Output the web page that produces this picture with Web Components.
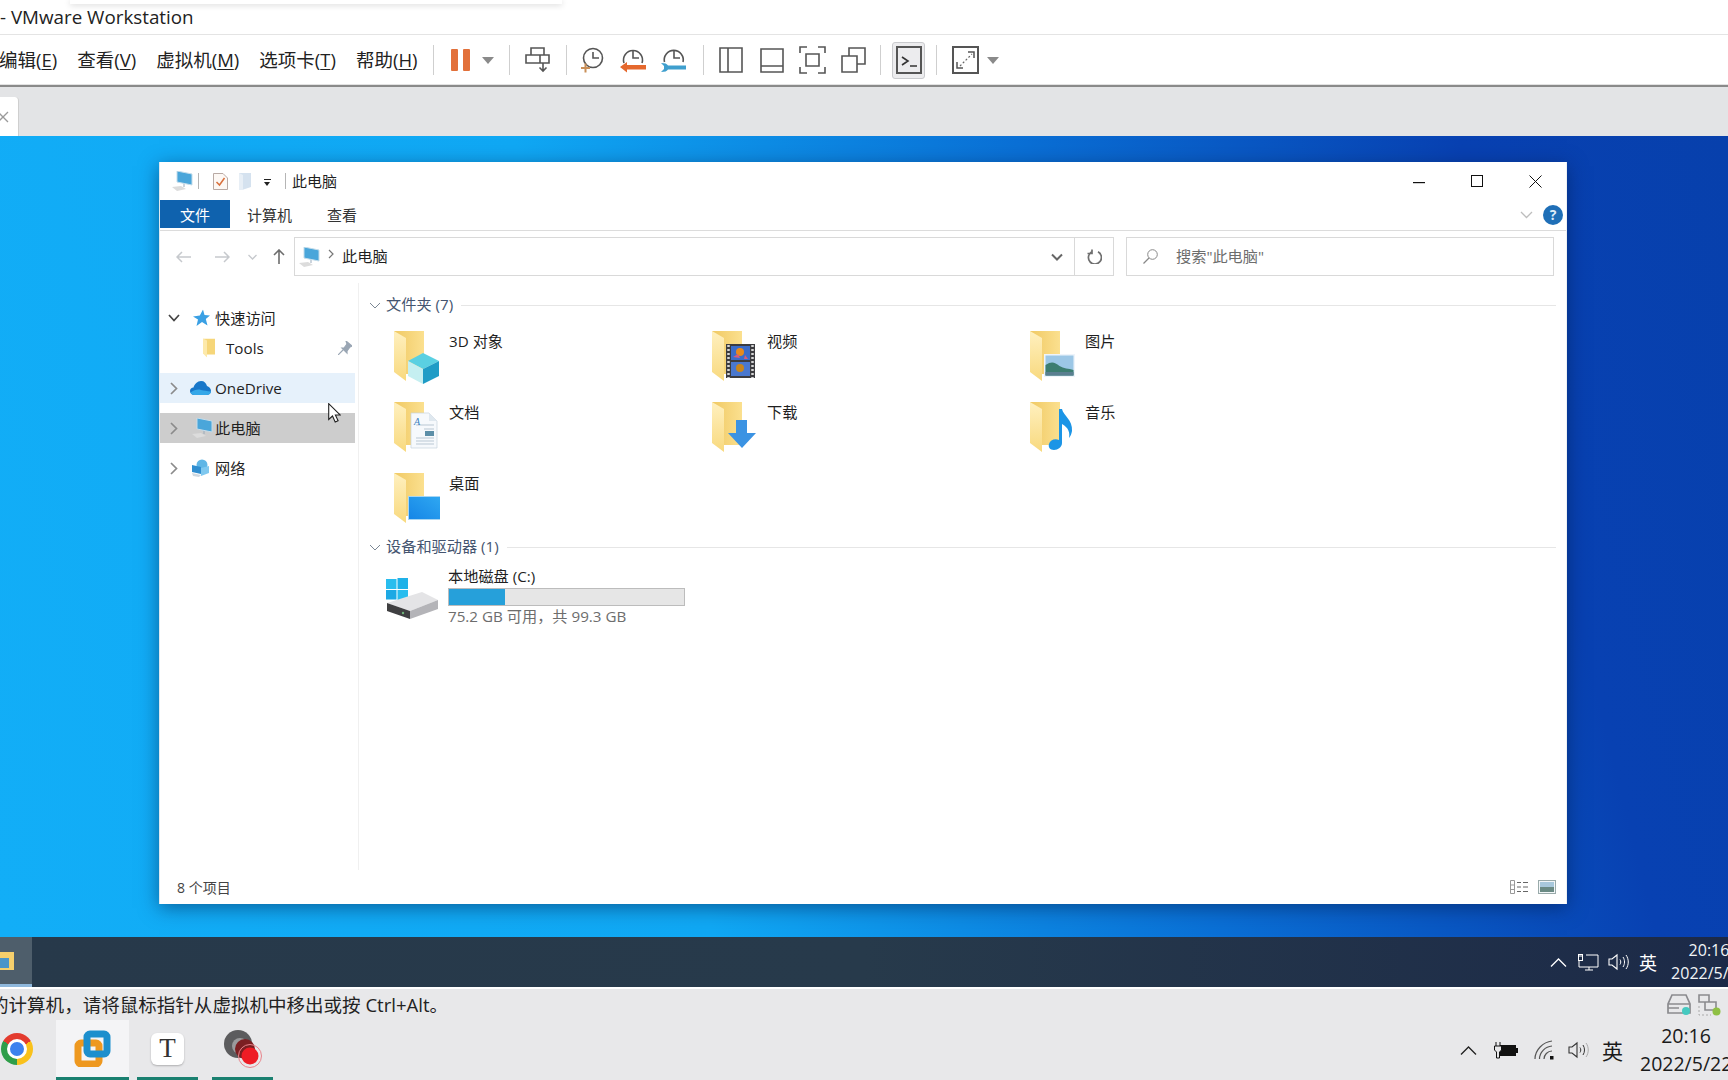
<!DOCTYPE html>
<html lang="zh">
<head>
<meta charset="utf-8">
<title>VMware Workstation</title>
<style>
html,body{margin:0;padding:0;width:1728px;height:1080px;overflow:hidden;background:#e8e8ea;}
body{display:flex;flex-direction:column;font-family:"Open Sans","Noto Sans CJK SC",sans-serif;color:#1a1a1a;}
</style>
</head>
<body>
<vm-titlebar>- VMware Workstation</vm-titlebar>
<vm-menubar></vm-menubar>
<vm-tabstrip></vm-tabstrip>
<guest-desktop>
  <explorer-window></explorer-window>
</guest-desktop>
<guest-taskbar></guest-taskbar>
<vm-statusbar>的计算机，请将鼠标指针从虚拟机中移出或按 Ctrl+Alt。</vm-statusbar>
<host-taskbar></host-taskbar>

<script>
const S = 'fill="none" stroke="#555" stroke-width="1.600"';
const FOLDER = `<path d="M0 0H30V43H12Z" fill="url(#b)"/><path d="M0 0L12 7V50L0 41Z" fill="url(#f)"/>
  <defs><linearGradient id="b" x1="0" x2="1" y1="0" y2="0"><stop offset="0" stop-color="#f0c964"/><stop offset="1" stop-color="#fbe08f"/></linearGradient>
  <linearGradient id="f" x1="0" x2="0" y1="0" y2="1"><stop offset="0" stop-color="#fff0bf"/><stop offset="1" stop-color="#f8d97e"/></linearGradient></defs>`;

// w, h, markup
const ICONS = {
  pc: [22,20,`<polygon points="6,0 21,3 21,14 6,11" fill="#4aa6da" stroke="#c4dcea"/><path d="M13 13v3" stroke="#9ab"/><polygon points="1,16 10,15 15,18 6,20" fill="#dcdcdc"/>`],
  check: [15,17,`<path d="M.5.5H10L14.5 5V16.5H.5Z" fill="#fdf8f4" stroke="#b9aaa4"/><path d="M3.5 9l3 3 5-7" fill="none" stroke="#d9703c" stroke-width="1.5"/>`],
  newfolder: [12,17,`<path d="M0 0H12V14L3 17H0Z" fill="#d5e2ef"/><path d="M0 0L4 2V17H0Z" fill="#e8eff6"/>`],
  star: [17,17,`<polygon points="10,0 11.5,5.5 17,6 12.8,9.6 14.5,16 9,12.4 3.5,16.5 5,10 0,7 6.8,6" fill="#3aa0e4"/>`],
  smallfolder: [12,19,`<path d="M0 0H12V16H4Z" fill="#f6d679"/><path d="M0 0L4 2V19L0 15Z" fill="#fde9aa"/>`],
  pin: [14,14,`<path d="M8 0l6 5-2 1-3 4 0 2-5-5 2 0 3-4ZM5 9L0 14" fill="#9aa6b4" stroke="#9aa6b4" stroke-width="1.2"/>`],
  cloud: [21,14,`<path d="M4.5 14C1.5 14 0 12 0 10S1.5 6.5 3.5 6.5C4.5 3 7.5 0 11 0S16 2 17 5C19 5.5 21 7.5 21 10S19 14 16.5 14Z" fill="#1877c9"/><path d="M4.5 14C2.5 14 1 13 .5 11.5 4 9 8 8 11 9c3 .8 6 1 10 1.5C20.700 12.500 19 14 16.500 14Z" fill="#35a7e8"/>`],
  net: [19,18,`<circle cx="11" cy="6" r="5.500" fill="#5fb6e6"/><polygon points="1,6 10,8 10,15 1,13" fill="#2f8ed0"/><polygon points="10,9 18,7 18,14 10,17" fill="#7fc8ef"/><polygon points="1,14 10,16 8,18 2,17" fill="#cfd8e0"/>`],
  cursor: [13,20,`<path d="M.7.7V16.500L4.500 13l2.700 6 2.900-1.300L7.400 12H12.300Z" fill="#fff" stroke="#222" stroke-width="1.100"/>`],
  back: [15,12,`<path d="M15 6H1M6 1L1 6l5 5" fill="none" stroke="#c6c9cd" stroke-width="1.500"/>`],
  fwd: [15,12,`<path d="M0 6H14M9 1l5 5-5 5" fill="none" stroke="#c6c9cd" stroke-width="1.500"/>`],
  down: [9,6,`<path d="M.5 1L4.500 5 8.500 1" fill="none" stroke="#c6c9cd" stroke-width="1.300"/>`],
  up: [12,15,`<path d="M6 15V1M1 6l5-5 5 5" fill="none" stroke="#6d6d6d" stroke-width="1.600"/>`],
  crumb: [6,10,`<path d="M1 1l4 4-4 4" fill="none" stroke="#777" stroke-width="1.200"/>`],
  chevD: [12,8,`<path d="M1 1.500L6 6.500 11 1.500" fill="none" stroke="#666" stroke-width="2"/>`],
  chevL: [12,7,`<path d="M1 1l5 5 5-5" fill="none" stroke="#7b8794" stroke-width="1"/>`],
  treeOpen: [12,8,`<path d="M1 1l5 5.500L11 1" fill="none" stroke="#444" stroke-width="1.700"/>`],
  treeClosed: [8,13,`<path d="M1 1l5.500 5.500L1 12" fill="none" stroke="#8b8b8b" stroke-width="1.700"/>`],
  refresh: [15,15,`<path d="M4 2.500A6.500 6.500 0 1 0 10.500 2.300M4.500 0V4H0" fill="none" stroke="#6f6f6f" stroke-width="1.700" transform="translate(.5 .5)"/>`],
  search: [15,15,`<circle cx="9.500" cy="5.500" r="4.800" fill="none" stroke="#888"/><path d="M6 9L.5 14.500" stroke="#888" stroke-width="1.200"/>`],
  min: [12,2,`<rect width="12" height="1.200" fill="#111"/>`],
  max: [12,12,`<rect x=".5" y=".5" width="11" height="11" fill="none" stroke="#111"/>`],
  close: [13,13,`<path d="M.5.5l12 12M12.500.5l-12 12" stroke="#111"/>`],
  ribchev: [13,8,`<path d="M1 1l5.500 5.500L12 1" fill="none" stroke="#bdbdbd" stroke-width="1.300"/>`],
  details: [18,14,`<path d="M.5.5h4v13h-4zM.5 5h4M.5 9.500h4" fill="none" stroke="#999"/><path d="M7 2.500h4M13 2.500h5M7 7h4M13 7h5M7 11.500h4M13 11.500h5" stroke="#666"/>`],
  large: [18,14,`<rect x=".5" y=".5" width="17" height="13" fill="#f2f6f8" stroke="#9aa"/><rect x="2" y="2" width="14" height="5" fill="#a8c8dc"/><rect x="2" y="7" width="14" height="5" fill="#6a8a84"/>`],
  drive: [52,42,`<rect x="0" y="1" width="10.500" height="10" fill="#29bdee"/><rect x="11.500" y="0" width="10.500" height="11" fill="#1fb1e8"/><rect x="0" y="12" width="10.500" height="9.500" fill="#1da9e4"/><rect x="11.500" y="12" width="10.500" height="10" fill="#29bdee"/>
     <polygon points="1,25 36,14 52,22 24,33" fill="#e4e4e6"/><polygon points="1,25 24,33 24,41 1,33" fill="#3f3f41"/><polygon points="24,33 52,22 52,31 24,41" fill="#b4b4b8"/><circle cx="17" cy="35" r="1.200" fill="#6fb37a"/>`],
  // toolbar
  send: [25,26,`<path ${S} d="M6 8V1h13v7M1 8h23v8H1zM15 8v8M18 16v8M14.500 20.500l3.500 3.500 3.500-3.500"/>`],
  snap: [24,26,`<circle ${S} cx="13" cy="11" r="9.500"/><path ${S} d="M13 5v6h6"/><path d="M1 21h9M5.500 16.500v9" stroke="#c98f58" stroke-width="2"/>`],
  revert: [26,26,`<path ${S} d="M4 16A9.500 9.500 0 1 1 22 16"/><path ${S} d="M13 4v7h6"/><path d="M0 20l7-5v3h19v4.500H7v3Z" fill="#e5682d"/>`],
  manage: [25,26,`<path ${S} d="M3.500 15A9.500 9.500 0 1 1 22 15"/><path ${S} d="M13 4v7h6"/><path d="M0 16c4 0 6 .8 7 2.500H25v4H7c-1 1.700-3 2.500-7 2.500l3-3v-3Z" fill="#3f9fce"/>`],
  pane: [24,26,`<path ${S} d="M1 1h22v24H1zM9 1v24"/>`],
  lib: [24,25,`<path ${S} d="M1 1h22v23H1zM1 18h22"/>`],
  fit: [27,28,`<path ${S} d="M1 7V1h7M19 1h7v6M26 21v6h-7M8 27H1v-6M7 8h13v12H7z"/>`],
  multi: [25,26,`<path ${S} d="M1 9h15v16H1zM8 9V1h16v16h-8"/>`],
  console: [26,28,`<rect x="1" y="1" width="24" height="26" fill="none" stroke="#555" stroke-width="2"/><path d="M6 11l6 4-6 4M14 20h7" fill="none" stroke="#333" stroke-width="1.600"/>`],
  full: [27,28,`<rect x="1" y="1" width="25" height="26" fill="none" stroke="#555" stroke-width="2"/><path d="M8 20L20 8" stroke="#666" stroke-width="1.200" stroke-dasharray="2 2"/><path d="M16 6h6v6M5 16v6h6" fill="none" stroke="#555" stroke-width="1.500"/>`],
  // tray
  gNet: [21,17,`<path d="M1 2h3M8 1h12v12H1V6M7 16h8M11 13v3" fill="none" stroke="#fff" stroke-width="1"/><rect x=".5" y="0.500" width="4" height="6" fill="none" stroke="#fff"/>`],
  spk: [21,18,`<path d="M1 6h3l5-4v14l-5-4H1Z" fill="none" stroke="CC" stroke-width="1.100"/><path d="M12 6.500c1 1.500 1 3.500 0 5M15 4c2 3 2 7 0 10" fill="none" stroke="CC"/><path d="M18 2c3 4 3 10 0 14" fill="none" stroke="C2"/>`],
  caretUp: [17,9,`<path d="M1 8.500L8.500 1 16 8.500" fill="none" stroke="CC" stroke-width="1.300"/>`],
  battery: [25,17,`<rect x="7" y="3" width="16" height="11" fill="#111"/><rect x="23" y="6" width="2" height="5" fill="#111"/><path d="M3 0v4M7 0v4" stroke="#111"/><path d="M1.500 4h7v4l-2 2v6h-3v-6l-2-2Z" fill="#e8e8ea" stroke="#111"/>`],
  wifi: [20,20,`<path d="M1 19C1 10 9 2 18 1M5.500 19c0-7 6-12.500 12.500-13M10 19c0-4 3.500-8 8-8" fill="none" stroke="#555" stroke-width="1.200"/><rect x="16" y="16" width="3.500" height="3.500" fill="#111"/>`],
  hdd: [25,21,`<path d="M1 19V10L5 1H19L23 10V19ZM1 10H23M1 14H12" fill="none" stroke="#8a8a8e" stroke-width="1.700"/><circle cx="19" cy="17" r="4" fill="#45c9c0"/>`],
  vnet: [23,22,`<path d="M1 1h10v7H1zM7 8h11v8H7z" fill="none" stroke="#8a8a8e" stroke-width="1.600"/><path d="M1 12v9h12" fill="none" stroke="#aaa" stroke-dasharray="2 2"/><circle cx="18.500" cy="17.500" r="4" fill="#8fc044"/>`],
  guestFolder: [15,20,`<path d="M0 1H14V19H0Z" fill="#f5cf6c"/><rect x="0" y="7" width="9" height="10" fill="#4a95c9"/>`],
  vmware: [37,37,`<rect x="4" y="13" width="21" height="21" rx="3" fill="none" stroke="#ee981f" stroke-width="7"/><rect x="13" y="4" width="20" height="20" rx="3" fill="none" stroke="#1d8fcd" stroke-width="7"/>`],
  record: [38,38,`<circle cx="14" cy="14" r="14" fill="#5c5c5e"/><circle cx="16" cy="16" r="8" fill="#9a9a9c"/><circle cx="21" cy="19" r="10" fill="#7c1f22"/><circle cx="26" cy="26" r="11.500" fill="none" stroke="#e8838a" stroke-width="1"/><circle cx="26" cy="26" r="8.500" fill="#ee1c25"/>`],
  // folder overlays
  "3d": [46,54,`${FOLDER}<polygon points="29,22 45,30 29,38 14,30" fill="#5ad0e2"/><polygon points="14,30 29,38 29,53 14,45" fill="#c5eff1"/><polygon points="45,30 29,38 29,53 45,45" fill="#1f9cc6"/>`],
  doc: [46,54,`${FOLDER}<path d="M17 11H35L43 19V46H17Z" fill="#f6f9fc" stroke="#c6d2dc" stroke-width=".7"/><path d="M35 11V19H43" fill="#dfe8ef"/><path d="M22 23H40M22 36H40M22 39H40M22 42H40M30 27H40" stroke="#b9c7d3" stroke-width="1"/><rect x="31" y="29" width="9" height="5" fill="#5c8fa8"/><text x="20" y="23" font-size="10" font-style="italic" font-family="Liberation Serif" fill="#3a7fbe">A</text>`],
  film: [46,54,`${FOLDER}<rect x="14" y="13" width="29" height="34" fill="#3c3c40"/><rect x="19" y="15" width="19" height="14" fill="#3b6cc9"/><rect x="19" y="31" width="19" height="14" fill="#4a78cf"/><circle cx="28" cy="21" r="4" fill="#e88a1c"/><circle cx="28" cy="37" r="4" fill="#c9861c"/><path d="M21 26l5-3 2 4zM33 24l3 4-4 0z" fill="#d75c7a"/><path d="M16.500 14v33M40.500 14v33" stroke="#d6d6d6" stroke-width="2.500" stroke-dasharray="2 2"/>`],
  pic: [46,54,`${FOLDER}<rect x="14" y="23" width="31" height="23" fill="#eef4fb"/><rect x="15.500" y="24.500" width="28" height="20" fill="#9cc7e6"/><path d="M15.500 34c6-4 9-3 14 1 4 2.500 9 2.500 14 4v5.500h-28Z" fill="#3c7d70"/><path d="M15.500 41h28v3.500h-28Z" fill="#5a7f90"/>`],
  dl: [46,54,`${FOLDER}<polygon points="24,18 35,18 35,31 44,31 30,46 16,31 24,31" fill="#3b93e3"/>`],
  music: [46,54,`${FOLDER}<path d="M29 7h3c1 6 11 11 10 22-.5 3-1.500 5-3 7 1-5 0-10-7-14V41c0 4-4 7-8 7-4 0-6-3-5-6 1-4 6-6 10-4Z" fill="#1c95e6"/>`],
  desk: [46,54,`${FOLDER}<rect x="14.500" y="23.500" width="32" height="23" fill="url(#d)" stroke="#a8d6f3"/><defs><linearGradient id="d" x1="0" x2="1" y1="1" y2="0"><stop offset="0" stop-color="#1585e6"/><stop offset="1" stop-color="#2fa8f2"/></linearGradient></defs>`],
};

function comp(name, html, setup) {
  customElements.define(name, class extends HTMLElement {
    constructor() {
      super();
      this.attachShadow({ mode: "open" }).innerHTML = typeof html == "function" ? html(this) : html;
    }
    connectedCallback() {
      if (setup) setup(this);
    }
  });
}

// icon lookup, colour words CC/C2 are swapped for the tint attribute
comp("ui-icon", `<style>:host{display:inline-flex;flex:none;line-height:0}</style><span></span>`, (el) => {
  const [w, h, body] = ICONS[el.getAttribute("name")];
  const c = el.getAttribute("tint") || "#333";
  const c2 = el.getAttribute("tint2") || c;
  el.shadowRoot.querySelector("span").innerHTML =
    `<svg xmlns="http://www.w3.org/2000/svg" width="${w}" height="${h}" viewBox="0 0 ${w} ${h}">${body.replace(/"CC"/g, `"${c}"`).replace(/"C2"/g, `"${c2}"`)}</svg>`;
});

comp("vm-titlebar", `<style>
:host{display:flex;align-items:center;flex:none;height:34px;border-bottom:1px solid #e4e4e4;background:#fff;font-size:18.800px;color:#222;position:relative;white-space:nowrap}
.pop{position:absolute;left:70px;top:0;width:492px;height:4px;background:#fff;box-shadow:0 1px 6px rgba(0,0,0,.18)}
</style><slot></slot><div class="pop"></div>`);

comp("vm-menubar", `<style>
:host{display:flex;align-items:center;flex:none;height:50px;background:#fff;border-bottom:2px solid #8a8a8a;box-shadow:inset 0 -1px 0 #e2e2e2;font-size:18.500px;color:#222;white-space:nowrap;overflow:hidden}
.menus{display:flex;gap:20px;margin-left:-1px;margin-bottom:3px}
u{text-underline-offset:2px}
.sep{flex:none;width:1px;height:30px;background:#cfcfcf}
.b{display:flex;align-items:center;justify-content:center;flex:none;width:41px}
.caret{flex:none;width:0;height:0;border-left:6px solid transparent;border-right:6px solid transparent;border-top:7px solid #8a8a8a}
.pause{display:flex;gap:5px;width:40px;justify-content:center}
.pause i{width:7px;height:22px;background:#e2703a;border-radius:1px}
.on{display:flex;align-items:center;justify-content:center;flex:none;width:33px;height:37px;box-sizing:border-box;background:#ececee;border:1px solid #c9cacd;border-radius:3px}
</style>
<div class="menus"><span>编辑(<u>E</u>)</span><span>查看(<u>V</u>)</span><span>虚拟机(<u>M</u>)</span><span>选项卡(<u>T</u>)</span><span>帮助(<u>H</u>)</span></div>
<div class="sep" style="margin-left:16px"></div>
<div class="pause" style="margin-left:6px"><i></i><i></i></div><div class="caret" style="margin-left:2px"></div>
<div class="sep" style="margin-left:15px"></div>
<div class="b" style="margin-left:7px"><ui-icon name="send"></ui-icon></div>
<div class="sep" style="margin-left:8px"></div>
<div class="b" style="margin-left:4px"><ui-icon name="snap"></ui-icon></div><div class="b"><ui-icon name="revert"></ui-icon></div><div class="b"><ui-icon name="manage"></ui-icon></div>
<div class="sep" style="margin-left:9px"></div>
<div class="b" style="margin-left:6px"><ui-icon name="pane"></ui-icon></div><div class="b"><ui-icon name="lib"></ui-icon></div><div class="b"><ui-icon name="fit"></ui-icon></div><div class="b"><ui-icon name="multi"></ui-icon></div>
<div class="sep" style="margin-left:6px"></div>
<div class="on" style="margin-left:11px"><ui-icon name="console"></ui-icon></div>
<div class="sep" style="margin-left:11px"></div>
<div class="b" style="margin-left:8px"><ui-icon name="full"></ui-icon></div><div class="caret" style="margin-left:1px"></div>`);

comp("vm-tabstrip", `<style>
:host{display:flex;align-items:flex-end;flex:none;height:49px;background:#e3e4e6}
.tab{display:flex;align-items:center;width:18px;height:39px;background:#fff;border-right:1px solid #cfcfcf;border-top-right-radius:4px}
</style><div class="tab"><svg width="10" height="12" viewBox="0 0 10 12"><path d="M-2 1l10 10M8 1L-2 11" stroke="#9a9a9a" stroke-width="1.300"/></svg></div>`);

comp("guest-desktop", `<style>
:host{display:block;flex:none;height:801px;box-sizing:border-box;padding:26px 161px 33px 159px;background:linear-gradient(76deg,#12aef7 0%,#10a8f4 37%,#0a70d6 63%,#0841b2 86%,#0740ac 100%)}
</style><slot></slot>`);

comp("explorer-window", `<style>
:host{display:flex;flex-direction:column;box-sizing:border-box;width:1408px;height:742px;border-left:1px solid #dfe8ef;border-right:1px solid #eef1f3;background:#fff;box-shadow:0 4px 18px rgba(0,25,70,.5);font-size:15.200px;color:#1f1f1f;position:relative;white-space:nowrap}
.cursor{position:absolute;left:168px;top:241px}
</style>
<win-title></win-title><win-ribbon></win-ribbon><win-nav></win-nav>
<win-body></win-body><win-status>8 个项目</win-status>
<ui-icon class="cursor" name="cursor"></ui-icon>`);

comp("win-title", `<style>
:host{display:flex;align-items:center;flex:none;height:38px;font-size:15px}
.s{width:1px;height:16px;background:#b5b5b5}
.c{margin-left:auto;display:flex;align-items:center}
.c ui-icon:nth-child(2){margin-left:46px}.c ui-icon:nth-child(3){margin-left:46px;margin-right:24px}
.tri{width:7px;height:1px;background:#222;position:relative;margin-left:13px;margin-top:-3px}
.tri::after{content:"";position:absolute;left:0;top:3px;border-left:3.500px solid transparent;border-right:3.500px solid transparent;border-top:4px solid #222}
.t{margin:0 0 2px 6px}
</style>
<ui-icon name="pc" style="margin-left:11px"></ui-icon><div class="s" style="margin-left:5px"></div>
<ui-icon name="check" style="margin-left:14px"></ui-icon><ui-icon name="newfolder" style="margin-left:11px"></ui-icon>
<div class="tri"></div><div class="s" style="margin-left:14px"></div><span class="t">此电脑</span>
<div class="c"><ui-icon name="min"></ui-icon><ui-icon name="max"></ui-icon><ui-icon name="close"></ui-icon></div>`);

comp("win-ribbon", `<style>
:host{display:flex;align-items:flex-start;flex:none;height:30px;border-bottom:1px solid #dcdcdc;font-size:15px;color:#333}
.file{display:flex;align-items:center;justify-content:center;width:70px;height:28px;background:#0f62ae;color:#fff}
span{line-height:31px}
.r{margin-left:auto;display:flex;align-items:center;gap:10px;margin-right:3px;height:30px}
.help{display:flex;align-items:center;justify-content:center;width:20px;height:20px;border-radius:50%;background:#1f6fb7;color:#dcecf8;font-weight:700;font-size:14px;line-height:1}
</style><div class="file">文件</div><span style="margin-left:17px">计算机</span><span style="margin-left:35px">查看</span>
<div class="r"><ui-icon name="ribchev"></ui-icon><div class="help">?</div></div>`);

comp("win-nav", `<style>
:host{display:flex;align-items:flex-start;flex:none;height:52px;box-sizing:border-box;padding-top:6px}
.n{display:flex;align-items:center;height:39px;flex:none}
.addr{display:flex;align-items:center;box-sizing:border-box;flex:none;width:820px;height:39px;margin-left:9px;border:1px solid #d9d9d9}
.addr .t{margin:0 0 3px 8px}
.drop{margin-left:auto;margin-right:11px}
.ref{display:flex;align-items:center;justify-content:center;width:38px;height:37px;border-left:1px solid #d9d9d9}
.search{display:flex;align-items:center;box-sizing:border-box;flex:none;width:428px;height:39px;margin-left:12px;border:1px solid #d9d9d9;color:#6d6d6d;padding-left:16px}
.search span{margin:0 0 3px 18px}
</style>
<div class="n" style="margin-left:16px"><ui-icon name="back"></ui-icon></div>
<div class="n" style="margin-left:24px"><ui-icon name="fwd"></ui-icon></div>
<div class="n" style="margin-left:18px"><ui-icon name="down"></ui-icon></div>
<div class="n" style="margin-left:16px"><ui-icon name="up"></ui-icon></div>
<div class="addr"><ui-icon name="pc" style="margin-left:3px"></ui-icon><ui-icon name="crumb" style="margin-left:8px;margin-top:-6px"></ui-icon><span class="t">此电脑</span>
<ui-icon class="drop" name="chevD"></ui-icon><div class="ref"><ui-icon name="refresh"></ui-icon></div></div>
<div class="search"><ui-icon name="search"></ui-icon><span>搜索"此电脑"</span></div>`);

comp("win-body", `<style>
:host{display:flex;flex:1;min-height:0}
nav{flex:none;box-sizing:border-box;width:199px;padding-top:20px;border-right:1px solid #f0f0f0}
tree-row.gap{margin-top:10px}
main{flex:1;min-width:0;padding:12px 10px 0 10px;box-sizing:border-box}
.grid{display:grid;grid-template-columns:repeat(3,318px);grid-auto-rows:71px;height:206px;margin-top:16px;padding-left:25px}
</style>
<nav>
  <tree-row open cjk icon="star">快速访问</tree-row>
  <tree-row leaf icon="smallfolder" pin>Tools</tree-row>
  <tree-row class="gap" icon="cloud" state="hover">OneDrive</tree-row>
  <tree-row class="gap" cjk icon="pc" state="sel">此电脑</tree-row>
  <tree-row class="gap" cjk icon="net">网络</tree-row>
</nav>
<main>
  <sec-head>文件夹 (7)</sec-head>
  <div class="grid">
    <folder-tile kind="3d">3D 对象</folder-tile><folder-tile kind="film">视频</folder-tile><folder-tile kind="pic">图片</folder-tile>
    <folder-tile kind="doc">文档</folder-tile><folder-tile kind="dl">下载</folder-tile><folder-tile kind="music">音乐</folder-tile>
    <folder-tile kind="desk">桌面</folder-tile>
  </div>
  <sec-head>设备和驱动器 (1)</sec-head>
  <drive-tile>本地磁盘 (C:)<span slot="sub">75.2 GB 可用，共 99.3 GB</span></drive-tile>
</main>`);

comp("tree-row", (el) => {
  const open = el.hasAttribute("open"), leaf = el.hasAttribute("leaf");
  const state = el.getAttribute("state");
  const bg = state == "hover" ? "#e6f1fb" : state == "sel" ? "#cdcdcd" : "transparent";
  const iconName = el.getAttribute("icon");
  const textX = leaf ? 66 : 55;
  const iconX = iconName == "pc" ? 31 : iconName == "net" ? 31 : iconName == "star" ? 33 : iconName == "cloud" ? 30 : 43;
  return `<style>
  :host{display:flex;align-items:center;width:195px;height:30px;background:${bg};position:relative}
  .ch{position:absolute;left:${open ? 8 : 10}px;top:${open ? 11 : 9}px;line-height:0}
  .ic{position:absolute;left:${iconX}px;top:50%;transform:translateY(-50%);line-height:0}
  .tx{margin-left:${textX}px;margin-bottom:${el.hasAttribute("cjk") ? 3 : 0}px}
  .pin{position:absolute;left:178px;top:8px}
  </style>
  ${leaf ? "" : `<div class="ch"><ui-icon name="${open ? "treeOpen" : "treeClosed"}"></ui-icon></div>`}
  <div class="ic"><ui-icon name="${iconName}"></ui-icon></div><span class="tx"><slot></slot></span>
  ${el.hasAttribute("pin") ? `<ui-icon class="pin" name="pin"></ui-icon>` : ""}`;
});

comp("sec-head", `<style>
:host{display:flex;align-items:center;height:20px;color:#44546f;gap:5px}
span{margin-bottom:5px}
div{flex:1;height:1px;background:#e6e6e6;margin-left:3px}
</style><ui-icon name="chevL"></ui-icon><span><slot></slot></span><div></div>`);

comp("folder-tile", (el) => `<style>
:host{display:flex;align-items:flex-start;gap:9px}
span{line-height:21px}
</style><ui-icon name="${el.getAttribute("kind")}"></ui-icon><span><slot></slot></span>`);

comp("drive-tile", (el) => `<style>
:host{display:flex;align-items:center;gap:10px;margin-top:9px;padding-left:17px}
.t{line-height:20px;padding-bottom:2px}
.bar{box-sizing:border-box;width:237px;height:18px;border:1px solid #bcbcbc;background:#e6e6e6}
.bar i{display:block;height:100%;width:24%;background:#26a0da}
.sub{line-height:20px;padding-bottom:2px;color:#6d6d6d}
</style><ui-icon name="drive" style="margin-top:4px"></ui-icon>
<div><div class="t"><slot></slot></div><div class="bar"><i></i></div><div class="sub"><slot name="sub"></slot></div></div>`);

comp("win-status", `<style>
:host{display:flex;align-items:center;flex:none;height:34px;padding-left:17px;color:#444;font-size:14px}
.r{margin-left:auto;display:flex;gap:10px;margin-right:10px}
</style><slot></slot><div class="r"><ui-icon name="details"></ui-icon><ui-icon name="large"></ui-icon></div>`);

comp("guest-taskbar", `<style>
:host{display:flex;align-items:center;flex:none;height:50px;background:linear-gradient(90deg,#27394a 0%,#273a4b 50%,#1c2a48 100%);color:#fff;white-space:nowrap;overflow:visible}
.app{display:flex;align-items:center;box-sizing:border-box;width:32px;height:50px;background:#4e5e6b;border-bottom:3px solid #8fb8dc}
.tray{margin-left:auto;margin-right:-20px;display:flex;align-items:center;flex:none}
.ime{margin-left:10px;font-size:18px;width:18px}
.clock{margin-left:13px;width:78px;text-align:center;font-size:16px;line-height:23px;color:#f1f4f6}
</style><div class="app"><ui-icon name="guestFolder"></ui-icon></div>
<div class="tray"><ui-icon name="caretUp" tint="#fff"></ui-icon>
<ui-icon name="gNet" style="margin-left:11px"></ui-icon><ui-icon name="spk" tint="#fff" style="margin-left:9px"></ui-icon>
<span class="ime">英</span><div class="clock">20:16<br>2022/5/22</div></div>`);

comp("vm-statusbar", `<style>
:host{display:flex;align-items:center;flex:none;height:31px;border-top:2px solid #fff;background:#e8e8ea;font-size:18.550px;color:#222;white-space:nowrap}
span{margin:0 0 2px -10px}
.r{margin-left:auto;margin-right:7px;display:flex;gap:6px}
</style><span><slot></slot></span><div class="r"><ui-icon name="hdd"></ui-icon><ui-icon name="vnet"></ui-icon></div>`);

comp("host-taskbar", `<style>
:host{display:flex;align-items:stretch;flex:1;background:#e8e8ea;color:#1a1a1a;white-space:nowrap;min-height:0}
.app{display:flex;align-items:center;justify-content:center;box-sizing:border-box;flex:none;height:60px;border-bottom:3px solid #1a8070}
.chrome{flex:none;width:32px;height:32px;margin:13px 0 0 1px;border-radius:50%;background:conic-gradient(from -60deg,#e33b2e 0 120deg,#f9c11c 0 240deg,#2f9e4a 0 360deg);position:relative}
.chrome::after{content:"";position:absolute;left:6px;top:6px;width:14px;height:14px;border-radius:50%;background:#3d82ee;border:3px solid #fff}
.t{display:flex;align-items:center;justify-content:center;width:33px;height:32px;border-radius:6px;background:#fff;box-shadow:0 1px 2px rgba(0,0,0,.25);font:400 27px "Liberation Serif",serif;color:#333}
.tray{margin-left:auto;margin-right:-4px;display:flex;align-items:center;flex:none}
.ime{margin-left:13px;font-size:21px;width:21px}
.clock{margin-left:17px;width:92px;text-align:center;font-size:19.500px;line-height:28px}
</style>
<div class="chrome"></div>
<div class="app" style="width:73px;margin-left:23px;background:#f4f4f6"><ui-icon name="vmware"></ui-icon></div>
<div class="app" style="width:61px;margin-left:8px"><div class="t">T</div></div>
<div class="app" style="width:61px;margin-left:14px"><ui-icon name="record"></ui-icon></div>
<div class="tray"><ui-icon name="caretUp" tint="#222"></ui-icon><ui-icon name="battery" style="margin-left:16px"></ui-icon>
<ui-icon name="wifi" style="margin-left:16px"></ui-icon><ui-icon name="spk" tint="#333" tint2="#aaa" style="margin-left:14px"></ui-icon>
<span class="ime">英</span><div class="clock">20:16<br>2022/5/22</div></div>`);
</script>
</body>
</html>
